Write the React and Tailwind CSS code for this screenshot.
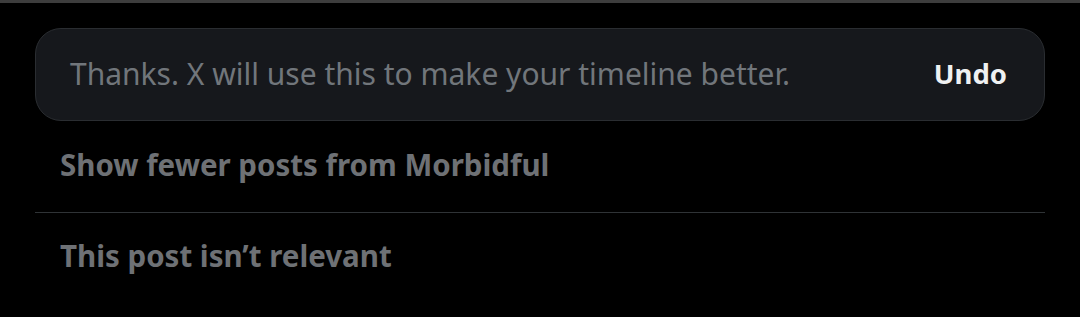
export default function App() {
  return (
    <div className="w-[1080px] h-[317px] bg-black overflow-hidden" style={{ fontFamily: '"Noto Sans", "Open Sans", sans-serif' }}>
      <div className="h-[3px] bg-[#3d3d3d]" />
      <div className="mx-[35px] mt-[25px] h-[93px] rounded-[26px] bg-[#16181c] border border-[#2a2d31] flex items-center justify-between pl-[34px] pr-[37px]">
        <span className="text-[30px] text-[#71767b] pb-[2px]">Thanks. X will use this to make your timeline better.</span>
        <span className="text-[27.5px] font-bold text-[#eff1f2] pb-[2px]">Undo</span>
      </div>
      <div className="mx-[35px]">
        <div className="h-[92px] flex items-center pl-[25px] pb-[3px] border-b border-[#2f3336]">
          <span className="text-[29.5px] font-bold text-[#6e7175]">Show fewer posts from Morbidful</span>
        </div>
        <div className="h-[86px] flex items-center pl-[25px]">
          <span className="text-[29.5px] font-bold text-[#6e7175]">This post isn’t relevant</span>
        </div>
      </div>
    </div>
  );
}
